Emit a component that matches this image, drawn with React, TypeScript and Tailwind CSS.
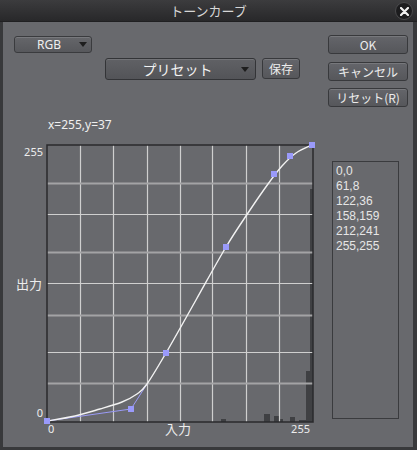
import React from 'react';

const font = { fontFamily: '"Noto Sans CJK JP", "Noto Sans", sans-serif' };
const latin = { fontFamily: '"Noto Sans", "Noto Sans CJK JP", sans-serif' };
const list = { fontFamily: '"Liberation Sans", Arial, sans-serif' };

const curve: [number, number][] = [
  [47, 421], [75, 416], [100, 409], [122, 402], [137, 394], [147, 384],
  [166, 353], [196, 300], [226, 247], [250, 210], [268, 184], [282, 166],
  [296, 153], [312, 145],
];

// smooth path through points (Catmull-Rom -> cubic bezier)
function smooth(pts: [number, number][]) {
  let d = `M${pts[0][0]},${pts[0][1]}`;
  for (let i = 0; i < pts.length - 1; i++) {
    const p0 = pts[i - 1] || pts[i];
    const p1 = pts[i];
    const p2 = pts[i + 1];
    const p3 = pts[i + 2] || p2;
    const c1x = p1[0] + (p2[0] - p0[0]) / 6;
    const c1y = p1[1] + (p2[1] - p0[1]) / 6;
    const c2x = p2[0] - (p3[0] - p1[0]) / 6;
    const c2y = p2[1] - (p3[1] - p1[1]) / 6;
    d += ` C${c1x.toFixed(1)},${c1y.toFixed(1)} ${c2x.toFixed(1)},${c2y.toFixed(1)} ${p2[0]},${p2[1]}`;
  }
  return d;
}

const points: [number, number][] = [
  [47, 421], [131, 409], [166, 353], [226, 247], [274, 174], [290, 156], [312, 145],
];

const vLines = [80, 113, 147, 180, 212, 246, 279];
const whiteH = [214, 283, 352];
const grayH = [183, 252, 315, 383];

const histo: [number, number, number, number][] = [
  [221, 419, 5, 3], [264, 414, 6, 8], [274, 416, 5, 6], [280, 419, 3, 3],
  [290, 417, 5, 5], [299, 420, 7, 2], [306, 371, 7, 51], [310, 189, 3, 233],
];

const Arrow = () => (
  <svg width="8" height="5" viewBox="0 0 8 5">
    <path d="M0 0 H8 L4 5 Z" fill="#1e1e1e" />
  </svg>
);

const Button = ({ label, className }: { label: string; className: string }) => (
  <div
    className={`flex items-center justify-center rounded-[3px] border border-[#38393c] bg-gradient-to-b from-[#64656a] to-[#56575b] text-[12px] text-[#ececec] shadow-[inset_0_1px_0_#77787c] ${className}`}
  >
    {label}
  </div>
);

function Graph() {
  return (
    <svg width="317" height="300" viewBox="3 140 317 300" className="block" style={font}>
      {histo.map(([x, y, w, h], i) => (
        <rect key={i} x={x} y={y} width={w} height={h} fill="#3f4043" />
      ))}
      {vLines.map((x) => (
        <line key={x} x1={x + 0.5} y1={145} x2={x + 0.5} y2={422} stroke="#cfcfcf" strokeWidth="1.2" />
      ))}
      {whiteH.map((y) => (
        <line key={y} x1={47} y1={y + 0.5} x2={313} y2={y + 0.5} stroke="#cfcfcf" strokeWidth="1.2" />
      ))}
      {grayH.map((y) => (
        <line key={y} x1={47} y1={y + 0.5} x2={313} y2={y + 0.5} stroke="#a3a3a5" strokeWidth="2" />
      ))}
      <rect x="47" y="145" width="266" height="277" fill="none" stroke="#2a2a2c" strokeWidth="1.5" />
      <polyline points="47,421 131,409 147,384" fill="none" stroke="#9a9af6" strokeWidth="1" />
      <path d={smooth(curve)} fill="none" stroke="#f2f2f2" strokeWidth="1.4" />
      {points.map(([x, y], i) => (
        <rect key={i} x={x - 3} y={y - 3} width="6" height="6" fill="#9a9afa" />
      ))}
      <g fill="#ededed" fontSize="11">
        <text x="43" y="156" textAnchor="end" style={latin}>255</text>
        <text x="43" y="417" textAnchor="end" style={latin}>0</text>
        <text x="48" y="433" style={latin}>0</text>
        <text x="310" y="433" textAnchor="end" style={latin}>255</text>
        <text x="42" y="289" textAnchor="end" fontSize="13">出力</text>
        <text x="178" y="434" textAnchor="middle" fontSize="13">入力</text>
      </g>
    </svg>
  );
}

export default function App() {
  const rows = ['0,0', '61,8', '122,36', '158,159', '212,241', '255,255'];
  return (
    <div className="w-[417px] h-[450px] flex flex-col overflow-hidden bg-[#2a2a2a]" style={font}>
      <div className="h-[22px] shrink-0 flex items-center justify-center relative bg-gradient-to-b from-[#3c3c3e] to-[#28282a] border-b border-[#202022]">
        <span className="text-[13px] text-[#d6d6d6] leading-none">トーンカーブ</span>
        <div className="absolute right-[4px] top-[2px] w-[18px] h-[18px] rounded-full bg-[#1c1c1e] border border-[#4a4a4c] flex items-center justify-center">
          <svg width="9" height="9" viewBox="0 0 9 9">
            <path d="M1 1 L8 8 M8 1 L1 8" stroke="#f0f0f0" strokeWidth="2.2" strokeLinecap="round" />
          </svg>
        </div>
      </div>
      <div className="flex-1 flex bg-[#68696d] border-l-[3px] border-r-[4px] border-b-[3px] border-[#38393b]">
        <div className="w-[317px] flex flex-col">
          <div className="pl-[11px] pt-[14px]">
            <div className="w-[78px] h-[17px] flex items-center rounded-[3px] border border-[#3a3b3e] bg-gradient-to-b from-[#65666a] to-[#57585c] shadow-[inset_0_1px_0_#78797d] text-[12px] text-[#efefef]" style={latin}>
              <span className="flex-1 text-center pl-[4px] leading-none">RGB</span>
              <span className="pr-[4px] flex"><Arrow /></span>
            </div>
          </div>
          <div className="mt-[5px] pl-[102px] flex items-start gap-[6px]">
            <div className="w-[151px] h-[22px] flex items-center rounded-[3px] border border-[#333437] bg-gradient-to-b from-[#606165] to-[#535458] shadow-[inset_0_1px_0_#727377] text-[14px] text-[#f2f2f2]">
              <span className="flex-1 text-center pl-[8px] leading-none">プリセット</span>
              <span className="pr-[6px] flex"><Arrow /></span>
            </div>
            <Button label="保存" className="w-[38px] h-[21px]" />
          </div>
          <div className="mt-[37px] pl-[45px] h-[16px] leading-[16px] text-[12px] text-[#efefef]" style={latin}>x=255,y=37</div>
          <div className="mt-[7px]">
            <Graph />
          </div>
        </div>
        <div className="flex flex-col pl-[8px] pt-[13px]">
          <Button label="OK" className="w-[80px] h-[19px]" />
          <Button label="キャンセル" className="w-[80px] h-[19px] mt-[8px]" />
          <Button label="リセット(R)" className="w-[80px] h-[19px] mt-[7px]" />
          <div className="ml-[4px] mt-[54px] w-[67px] h-[258px] border border-[#3a3b3e] pl-[3px] pt-[2px] text-[12px] leading-[15px] text-[#e6e6e6]" style={list}>
            {rows.map((r) => (
              <div key={r} className="h-[15px]">{r}</div>
            ))}
          </div>
        </div>
      </div>
    </div>
  );
}
